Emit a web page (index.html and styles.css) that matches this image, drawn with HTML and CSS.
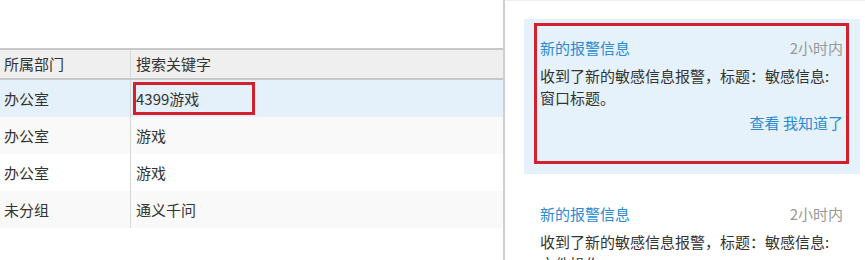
FILE: index.html
```html
<!DOCTYPE html>
<html lang="zh-CN">
<head>
<meta charset="utf-8">
<link rel="stylesheet" href="styles.css">
</head>
<body>
<div class="page">
  <section class="left">
    <div class="grid">
      <div class="row head">
        <div class="cell c1">所属部门</div>
        <div class="cell c2">搜索关键字</div>
      </div>
      <div class="row sel">
        <div class="cell c1">办公室</div>
        <div class="cell c2 mark">4399游戏<span class="redbox tbox"></span></div>
      </div>
      <div class="row alt">
        <div class="cell c1">办公室</div>
        <div class="cell c2">游戏</div>
      </div>
      <div class="row">
        <div class="cell c1">办公室</div>
        <div class="cell c2">游戏</div>
      </div>
      <div class="row alt">
        <div class="cell c1">未分组</div>
        <div class="cell c2">通义千问</div>
      </div>
    </div>
  </section>
  <aside class="right">
    <div class="card active">
      <span class="redbox cbox"></span>
      <div class="card-head">
        <span class="title">新的报警信息</span>
        <span class="time">2小时内</span>
      </div>
      <div class="body">收到了新的敏感信息报警，标题：敏感信息:<br>窗口标题。</div>
      <div class="links"><a>查看</a> <a>我知道了</a></div>
    </div>
    <div class="card">
      <div class="card-head">
        <span class="title">新的报警信息</span>
        <span class="time">2小时内</span>
      </div>
      <div class="body">收到了新的敏感信息报警，标题：敏感信息:<br>文件操作</div>
    </div>
  </aside>
</div>
</body>
</html>
```
FILE: styles.css
```css
* { box-sizing: border-box; }
html, body { margin: 0; padding: 0; background: #fff; }
body {
  font-family: "Noto Sans CJK SC", "Noto Sans", sans-serif;
  font-size: 15px;
  color: #333;
}
.page {
  display: flex;
  width: 865px;
  height: 260px;
  overflow: hidden;
}
.left {
  width: 505px;
  flex: none;
  padding-top: 48px;
  border-right: 2px solid #cfcfcf;
}
.grid { display: flex; flex-direction: column; }
.row {
  display: flex;
  height: 37px;
  align-items: stretch;
}
.row.head {
  height: 32px;
  background: #efefef;
  border-top: 2px solid #c8c8c8;
  border-bottom: 2px solid #c8c8c8;
}
.row.sel { background: #e4f1fa; }
.row.alt { background: #f9f9f9; }
.cell {
  display: flex;
  align-items: center;
  line-height: 20px;
  white-space: nowrap;
}
.c1 {
  width: 131px;
  padding-left: 4px;
  border-right: 1px solid #d6d6d6;
}
.c2 {
  flex: 1;
  padding-left: 5px;
  position: relative;
}
.redbox {
  position: absolute;
  border: 3px solid #d4202c;
  pointer-events: none;
}
.tbox {
  left: 2px;
  top: 2px;
  width: 122px;
  height: 33px;
}
.right {
  flex: 1;
  padding: 18px 5px 0 19px;
  border-top: 1px solid #eeeeee;
}
.card {
  position: relative;
  padding: 18px 17px 0 16px;
  height: 155px;
  margin-bottom: 11px;
}
.card.active { background: #e5f2fb; }
.cbox {
  left: 10px;
  top: 4px;
  width: 315px;
  height: 141px;
}
.card-head {
  display: flex;
  justify-content: space-between;
  line-height: 22px;
  margin-bottom: 6px;
}
.title { color: #2b8ad1; }
.time { color: #999; }
.body { line-height: 22px; color: #333; }
.links {
  text-align: right;
  line-height: 22px;
  margin-top: 3px;
  color: #2b8ad1;
}
.links a { color: #2b8ad1; }
```
